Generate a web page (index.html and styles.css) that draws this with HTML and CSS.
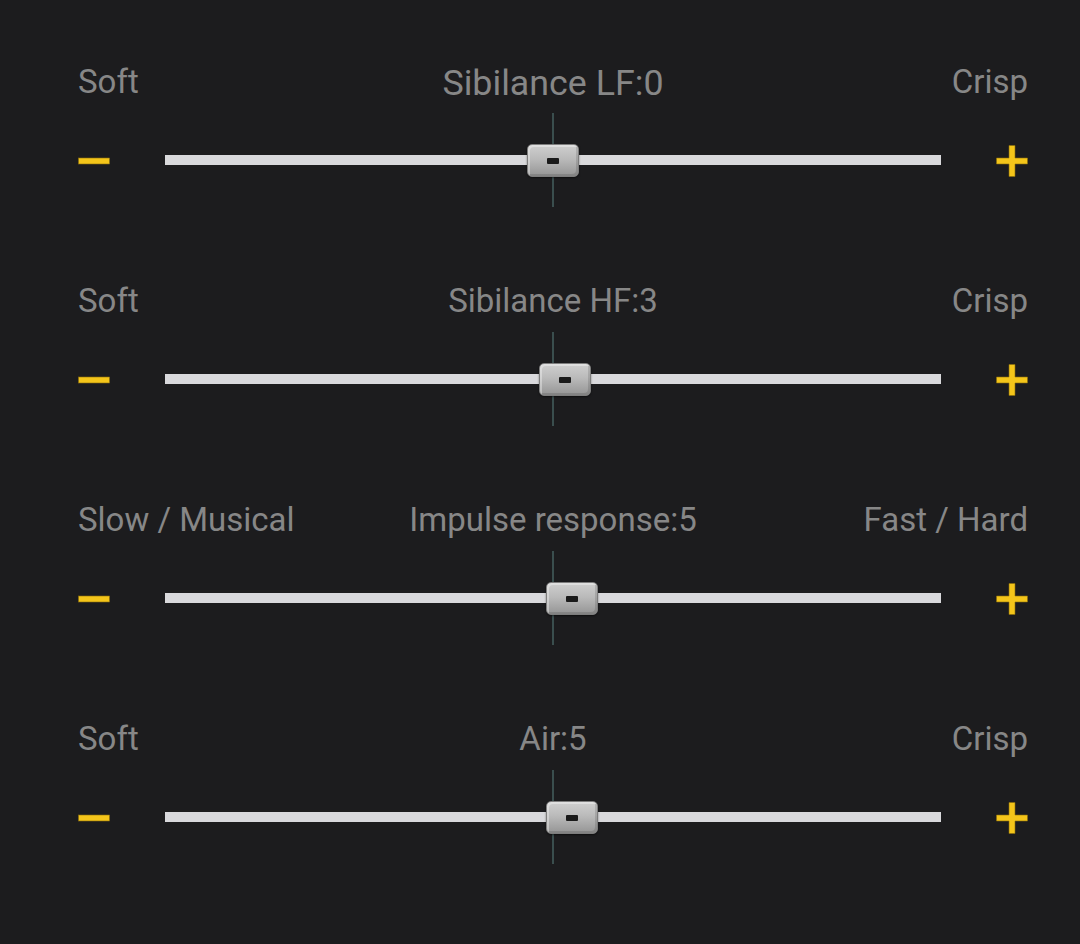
FILE: index.html
```html
<!DOCTYPE html>
<html>
<head>
<meta charset="utf-8">
<link rel="stylesheet" href="styles.css">
</head>
<body>
<main class="panel">
  <section class="control">
    <div class="labels"><span class="lo">Soft</span><span class="title title-lg">Sibilance LF:0</span><span class="hi">Crisp</span></div>
    <div class="slider-row">
      <button class="btn minus" aria-label="decrease"><svg width="32" height="32" viewBox="0 0 32 32"><rect x="0.5" y="13" width="31" height="6" fill="#f4c51a" stroke="#8a6d0c" stroke-width="0.6"/></svg></button>
      <div class="track"><div class="center-line"></div><div class="thumb" style="left:50%"><span class="grip"></span></div></div>
      <button class="btn plus" aria-label="increase"><svg width="32" height="32" viewBox="0 0 32 32"><path d="M13 0.5h6v12.5h12.5v6H19v12.5h-6V19H0.5v-6H13z" fill="#f4c51a" stroke="#8a6d0c" stroke-width="0.6"/></svg></button>
    </div>
  </section>
  <section class="control">
    <div class="labels"><span class="lo">Soft</span><span class="title">Sibilance HF:3</span><span class="hi">Crisp</span></div>
    <div class="slider-row">
      <button class="btn minus" aria-label="decrease"><svg width="32" height="32" viewBox="0 0 32 32"><rect x="0.5" y="13" width="31" height="6" fill="#f4c51a" stroke="#8a6d0c" stroke-width="0.6"/></svg></button>
      <div class="track"><div class="center-line"></div><div class="thumb" style="left:51.55%"><span class="grip"></span></div></div>
      <button class="btn plus" aria-label="increase"><svg width="32" height="32" viewBox="0 0 32 32"><path d="M13 0.5h6v12.5h12.5v6H19v12.5h-6V19H0.5v-6H13z" fill="#f4c51a" stroke="#8a6d0c" stroke-width="0.6"/></svg></button>
    </div>
  </section>
  <section class="control">
    <div class="labels"><span class="lo">Slow / Musical</span><span class="title">Impulse response:5</span><span class="hi">Fast / Hard</span></div>
    <div class="slider-row">
      <button class="btn minus" aria-label="decrease"><svg width="32" height="32" viewBox="0 0 32 32"><rect x="0.5" y="13" width="31" height="6" fill="#f4c51a" stroke="#8a6d0c" stroke-width="0.6"/></svg></button>
      <div class="track"><div class="center-line"></div><div class="thumb" style="left:52.45%"><span class="grip"></span></div></div>
      <button class="btn plus" aria-label="increase"><svg width="32" height="32" viewBox="0 0 32 32"><path d="M13 0.5h6v12.5h12.5v6H19v12.5h-6V19H0.5v-6H13z" fill="#f4c51a" stroke="#8a6d0c" stroke-width="0.6"/></svg></button>
    </div>
  </section>
  <section class="control">
    <div class="labels"><span class="lo">Soft</span><span class="title">Air:5</span><span class="hi">Crisp</span></div>
    <div class="slider-row">
      <button class="btn minus" aria-label="decrease"><svg width="32" height="32" viewBox="0 0 32 32"><rect x="0.5" y="13" width="31" height="6" fill="#f4c51a" stroke="#8a6d0c" stroke-width="0.6"/></svg></button>
      <div class="track"><div class="center-line"></div><div class="thumb" style="left:52.45%"><span class="grip"></span></div></div>
      <button class="btn plus" aria-label="increase"><svg width="32" height="32" viewBox="0 0 32 32"><path d="M13 0.5h6v12.5h12.5v6H19v12.5h-6V19H0.5v-6H13z" fill="#f4c51a" stroke="#8a6d0c" stroke-width="0.6"/></svg></button>
    </div>
  </section>
</main>
</body>
</html>
```
FILE: styles.css
```css
html, body {
  margin: 0;
  padding: 0;
  background: #1c1c1e;
  height: 100%;
}
body {
  font-family: Roboto, "Liberation Sans", sans-serif;
  color: #878787;
}
.panel {
  padding: 62px 52px 0 78px;
  display: flex;
  flex-direction: column;
}
.control {
  height: 219px;
  display: flex;
  flex-direction: column;
}
.labels {
  display: grid;
  grid-template-columns: 1fr auto 1fr;
  font-size: 33px;
  line-height: 40px;
  height: 40px;
  white-space: nowrap;
}
.labels .lo { justify-self: start; }
.labels .title { justify-self: center; }
.labels .title-lg { font-size: 35.8px; position: relative; top: 1px; }
.labels .hi { justify-self: end; }
.slider-row {
  margin-top: 11px;
  height: 94px;
  display: grid;
  grid-template-columns: 32px 1fr 32px;
  column-gap: 55px;
  align-items: center;
}
.btn {
  width: 32px;
  height: 32px;
  padding: 0;
  border: 0;
  background: none;
  display: block;
  margin-top: 1px;
}
.btn svg { display: block; }
.track {
  position: relative;
  height: 10px;
  background: #d9d9dc;
}
.center-line {
  position: absolute;
  left: 50%;
  top: -42px;
  width: 2px;
  margin-left: -1px;
  height: 94px;
  background: #3a4e4e;
}
.thumb {
  position: absolute;
  top: 50%;
  width: 52px;
  height: 33px;
  margin-left: -26px;
  margin-top: -16px;
  box-sizing: border-box;
  border-radius: 5px;
  border: 1px solid #7d7d7d;
  background: linear-gradient(to bottom, #cfcfcf 0%, #bababa 45%, #959595 100%);
  box-shadow: inset 2px 2px 0 rgba(255,255,255,0.35), inset -2px -2px 0 rgba(0,0,0,0.12), 0 1px 2px rgba(0,0,0,0.5);
  display: flex;
  align-items: center;
  justify-content: center;
}
.grip {
  width: 12px;
  height: 6px;
  background: #1a1a1a;
  border-radius: 1px;
  margin-top: 1px;
}
```
